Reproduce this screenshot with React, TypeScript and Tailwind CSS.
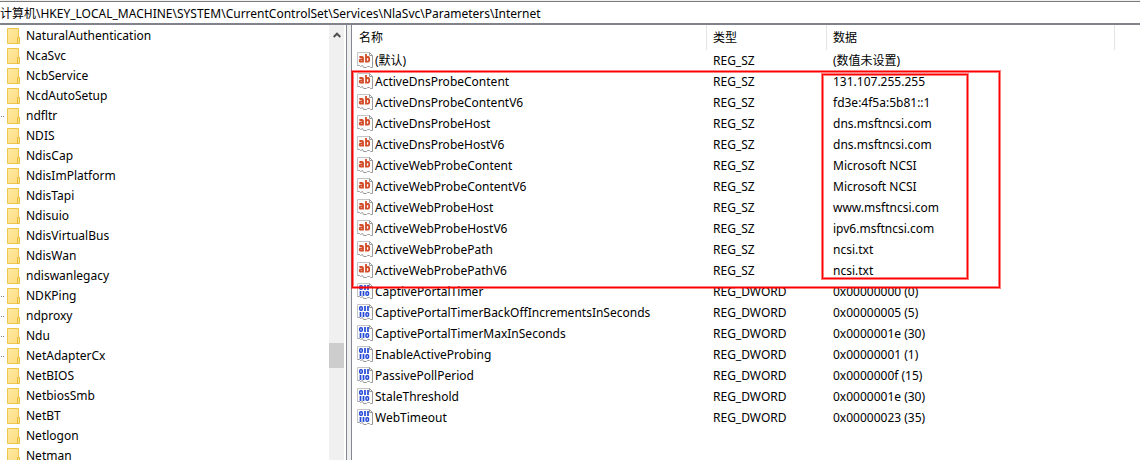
import React from "react";

type RegType = "REG_SZ" | "REG_DWORD";
type RegValue = { name: string; type: RegType; data: string };

const keys: { name: string; branch?: boolean }[] = [
  { name: "NaturalAuthentication" },
  { name: "NcaSvc" },
  { name: "NcbService" },
  { name: "NcdAutoSetup" },
  { name: "ndfltr", branch: true },
  { name: "NDIS" },
  { name: "NdisCap" },
  { name: "NdisImPlatform" },
  { name: "NdisTapi" },
  { name: "Ndisuio" },
  { name: "NdisVirtualBus" },
  { name: "NdisWan" },
  { name: "ndiswanlegacy" },
  { name: "NDKPing", branch: true },
  { name: "ndproxy", branch: true },
  { name: "Ndu", branch: true },
  { name: "NetAdapterCx", branch: true },
  { name: "NetBIOS" },
  { name: "NetbiosSmb" },
  { name: "NetBT" },
  { name: "Netlogon" },
  { name: "Netman" },
];

const values: RegValue[] = [
  { name: "(默认)", type: "REG_SZ", data: "(数值未设置)" },
  { name: "ActiveDnsProbeContent", type: "REG_SZ", data: "131.107.255.255" },
  { name: "ActiveDnsProbeContentV6", type: "REG_SZ", data: "fd3e:4f5a:5b81::1" },
  { name: "ActiveDnsProbeHost", type: "REG_SZ", data: "dns.msftncsi.com" },
  { name: "ActiveDnsProbeHostV6", type: "REG_SZ", data: "dns.msftncsi.com" },
  { name: "ActiveWebProbeContent", type: "REG_SZ", data: "Microsoft NCSI" },
  { name: "ActiveWebProbeContentV6", type: "REG_SZ", data: "Microsoft NCSI" },
  { name: "ActiveWebProbeHost", type: "REG_SZ", data: "www.msftncsi.com" },
  { name: "ActiveWebProbeHostV6", type: "REG_SZ", data: "ipv6.msftncsi.com" },
  { name: "ActiveWebProbePath", type: "REG_SZ", data: "ncsi.txt" },
  { name: "ActiveWebProbePathV6", type: "REG_SZ", data: "ncsi.txt" },
  { name: "CaptivePortalTimer", type: "REG_DWORD", data: "0x00000000 (0)" },
  { name: "CaptivePortalTimerBackOffIncrementsInSeconds", type: "REG_DWORD", data: "0x00000005 (5)" },
  { name: "CaptivePortalTimerMaxInSeconds", type: "REG_DWORD", data: "0x0000001e (30)" },
  { name: "EnableActiveProbing", type: "REG_DWORD", data: "0x00000001 (1)" },
  { name: "PassivePollPeriod", type: "REG_DWORD", data: "0x0000000f (15)" },
  { name: "StaleThreshold", type: "REG_DWORD", data: "0x0000001e (30)" },
  { name: "WebTimeout", type: "REG_DWORD", data: "0x00000023 (35)" },
];

function FolderIcon() {
  return (
    <svg className="h-4 w-[13px] shrink-0" viewBox="0 0 13 16" aria-hidden="true">
      <defs>
        <linearGradient id="folder" x1="0" y1="0" x2="1" y2="1">
          <stop offset="0" stopColor="#ffe9a2" />
          <stop offset="1" stopColor="#fbdc80" />
        </linearGradient>
      </defs>
      <path d="M.5.5h11v15H.5z" fill="url(#folder)" stroke="#edc64b" />
      <path d="M10.5 9.5h2v6h-2z" fill="#fbe08a" stroke="#e9bd3c" />
    </svg>
  );
}

function PageShape() {
  return (
    <>
      <path d="M.5.5h12l3 3v12h-2l-1-1h-2l-2 1-3-1-2-1h-3z" fill="#fcfcfc" />
      <path d="M.5 13.5V.5h12" fill="none" stroke="#c4c4c4" />
      <path d="M12.5.5v3h3M12.5.5l3 3v12h-2l-1-1h-2l-1 1h-3l-1-2-2 1-1-1h-2" fill="none" stroke="#9b9b9b" />
    </>
  );
}

function StringIcon() {
  return (
    <svg className="h-4 w-4 shrink-0" viewBox="0 0 16 16" aria-hidden="true">
      <PageShape />
      <g fill="none" stroke="#d34a27" strokeWidth="1.8">
        <path d="M2.4 5H5Q6 5 6 6v4.500M6 7.400H4Q2.700 7.400 2.700 8.600T4 9.700Q5.500 9.700 6 8.600" />
        <path d="M9 2v8.500M9 6.200Q9.500 5 11 5 12.200 5 12.200 7.300T11 9.600H9" />
      </g>
    </svg>
  );
}

function BinaryIcon() {
  return (
    <svg className="h-4 w-4 shrink-0" viewBox="0 0 16 16" aria-hidden="true">
      <PageShape />
      <g fill="none" stroke="#2449d8" strokeWidth="1.5">
        <rect x="2.750" y="2.750" width="2.500" height="3.500" rx="1" />
        <path d="M8 2v5M11 2v5M3.500 8v5M6.500 8v5" strokeWidth="1.7" />
        <rect x="9" y="8.750" width="2.500" height="3.500" rx="1" />
      </g>
    </svg>
  );
}

export default function App() {
  return (
    <main className="flex h-screen flex-col overflow-hidden bg-white font-['Noto_Sans','Noto_Sans_CJK_SC',sans-serif] text-xs text-black">
      <div className="shrink-0 border-b-2 border-[#80838b] bg-[#f0f0f0] pt-px">
        <input
          aria-label="地址"
          className="block h-[22px] w-full border-t border-[#7a7a7a] bg-white outline-none"
          defaultValue="计算机\HKEY_LOCAL_MACHINE\SYSTEM\CurrentControlSet\Services\NlaSvc\Parameters\Internet"
        />
      </div>
      <div className="flex min-h-0 flex-1 bg-[#f0f0f0]">
        <nav aria-label="注册表项" className="flex w-[347px] shrink-0 border-r border-[#828790] bg-white">
          <ul className="min-w-0 flex-1 overflow-hidden pt-px">
            {keys.map((key) => (
              <li key={key.name}>
                <button type="button" className="flex h-5 w-full items-center text-left">
                  <span className="flex w-[7px] shrink-0 gap-px" aria-hidden="true">
                    {key.branch && (
                      <>
                        <i className="ml-px h-px w-px bg-[#808080]" />
                        <i className="h-px w-px bg-[#808080]" />
                      </>
                    )}
                  </span>
                  <FolderIcon />
                  <span className="pl-1.5">{key.name}</span>
                </button>
              </li>
            ))}
          </ul>
          <div className="mr-0.5 flex w-[15px] shrink-0 flex-col bg-[#f0f0f0]">
            <button type="button" aria-label="向上滚动" className="flex h-5 items-center justify-center">
              <svg className="h-2 w-2" viewBox="0 0 8 8" aria-hidden="true">
                <path d="M.7 6 4 2.700 7.300 6" fill="none" stroke="#505050" strokeWidth="2" />
              </svg>
            </button>
            <div className="flex-[298] basis-0" />
            <div className="h-[25px] bg-[#cdcdcd]" />
            <div className="flex-[92] basis-0" />
          </div>
        </nav>
        <section aria-label="值" className="relative ml-1 min-w-0 flex-1 border-l border-[#828790] bg-white">
          <table className="w-full table-fixed border-separate border-spacing-0 text-left">
            <colgroup>
              <col className="w-[355px]" />
              <col className="w-[120px]" />
              <col className="w-[288px]" />
              <col />
            </colgroup>
            <thead>
              <tr className="h-[25px]">
                <th className="border-r border-[#e5e5e5] p-0 pl-[7px] font-normal">名称</th>
                <th className="border-r border-[#e5e5e5] p-0 pl-1.5 font-normal">类型</th>
                <th className="border-r border-[#e5e5e5] p-0 pl-1.5 font-normal">数据</th>
                <th className="p-0" />
              </tr>
            </thead>
            <tbody>
              {values.map((value) => (
                <tr key={value.name} className="h-[21px]">
                  <td className="p-0 pl-[5px]">
                    <span className="flex h-[21px] items-start gap-0.5 pt-0.5">
                      {value.type === "REG_SZ" ? <StringIcon /> : <BinaryIcon />}
                      <span className="leading-[18px]">{value.name}</span>
                    </span>
                  </td>
                  <td className="p-0 pl-1.5">{value.type}</td>
                  <td className="p-0 pl-1.5">{value.data}</td>
                  <td className="p-0" />
                </tr>
              ))}
            </tbody>
          </table>
          <div className="pointer-events-none absolute left-0 top-[46px] h-[217px] w-[648px] border border-[#ff0000] shadow-[0_0_0_1px_#ff000080,inset_0_0_0_1px_#ff000080]" />
          <div className="pointer-events-none absolute left-[470px] top-[49px] h-[205px] w-[146px] border border-[#ff0000] shadow-[0_0_0_1px_#ff000080,inset_0_0_0_1px_#ff000080]" />
        </section>
      </div>
    </main>
  );
}
